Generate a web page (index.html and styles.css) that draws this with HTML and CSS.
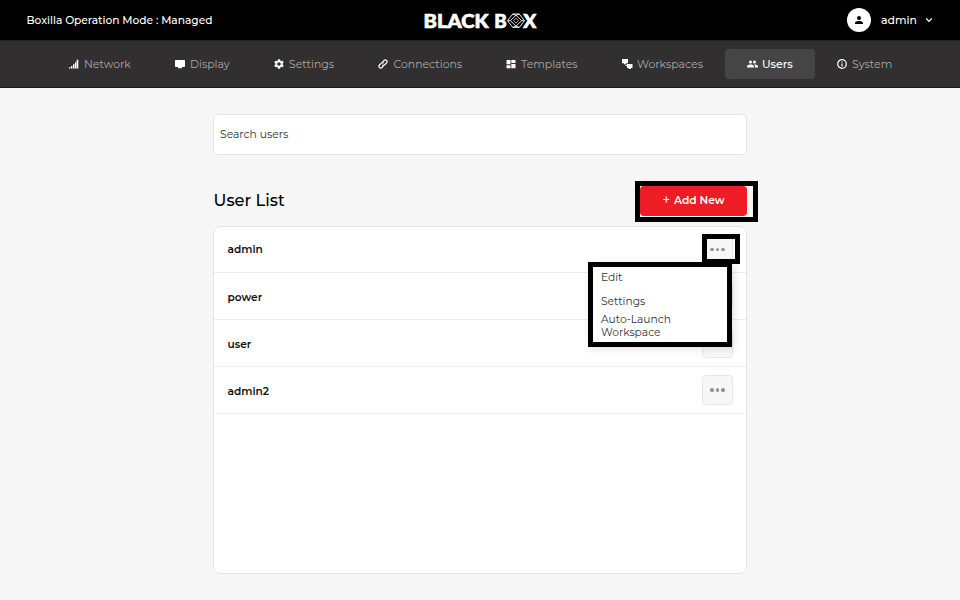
FILE: index.html
```html
<!DOCTYPE html>
<html lang="en">
<head>
<meta charset="utf-8">
<title>Boxilla - Users</title>
<link rel="stylesheet" href="styles.css">
</head>
<body>
<header class="topbar">
  <div class="mode">Boxilla Operation Mode : Managed</div>
  <svg class="logo" viewBox="-3.500 -5.500 120 30" role="img" aria-label="Black Box">
    <g class="logo-text">
      <text x="0" y="17.300" textLength="65" lengthAdjust="spacingAndGlyphs">BLACK</text>
      <text x="70.800" y="17.300" textLength="12.500" lengthAdjust="spacingAndGlyphs">B</text>
      <text x="99.800" y="17.300" textLength="13" lengthAdjust="spacingAndGlyphs">X</text>
    </g>
    <path class="logo-mark" d="M89.300 3.500h6.400l5.300 6.700-5.300 6.700h-6.400L84 10.200zM92.500 4.700l5.600 5.500-5.600 5.500-5.600-5.500zM89.300 3.500l3.200 1.200 3.200-1.200M89.300 16.900l3.200-1.200 3.200 1.200M84 10.200h2.900M98.100 10.200h2.900"/>
    <path class="logo-inner" d="M92.500 7.700l2.500 2.500-2.500 2.500-2.500-2.500z"/>
  </svg>
  <div class="account">
    <span class="avatar"><svg viewBox="0 0 24 24"><path d="M12 12a4 4 0 1 0 0-8 4 4 0 0 0 0 8zm0 2c-2.700 0-8 1.300-8 4v2h16v-2c0-2.700-5.300-4-8-4z"/></svg></span>
    <span class="account-name">admin</span>
    <svg class="chevron" viewBox="0 0 8 6"><path d="M1.200 1.500 4 4.300 6.800 1.500"/></svg>
  </div>
</header>
<nav class="nav">
  <a class="item"><svg class="icon" viewBox="0 0 10 10"><path d="M0 8.200h1.400V9.500H0zM2 7h1.400v2.500H2zM4 5.300h1.500v4.200H4zM6 3.300h1.300v6.200H6zM7.700.800h1.600v8.700H7.700z"/></svg><span class="label">Network</span></a>
  <a class="item"><svg class="icon" viewBox="0 0 10 10"><path d="M.8 1h8.400q.8 0 .8.800v5.400q0 .8-.8.800H7v1.200H3V8H.8Q0 8 0 7.200V1.800Q0 1 .8 1z"/></svg><span class="label">Display</span></a>
  <a class="item"><svg class="icon" viewBox="2 2 20 20"><path d="M19.140 12.940c.040-.3.060-.610.060-.940s-.020-.640-.070-.940l2.030-1.580a.49.49 0 0 0 .120-.610l-1.920-3.320a.49.49 0 0 0-.590-.220l-2.390.960a7 7 0 0 0-1.620-.940l-.360-2.540a.48.48 0 0 0-.480-.410h-3.840a.48.48 0 0 0-.470.410l-.360 2.540a7 7 0 0 0-1.620.940l-2.390-.960a.49.49 0 0 0-.590.220L2.740 8.870a.49.49 0 0 0 .120.610l2.030 1.580a6 6 0 0 0 0 1.880l-2.030 1.580a.49.49 0 0 0-.120.610l1.920 3.320c.120.220.370.290.590.220l2.390-.960a7 7 0 0 0 1.620.940l.36 2.540c.050.240.240.410.480.410h3.840c.240 0 .440-.170.470-.410l.36-2.540a7 7 0 0 0 1.620-.940l2.390.960c.220.080.470 0 .590-.220l1.920-3.320a.49.49 0 0 0-.120-.610zM12 15.600a3.600 3.600 0 1 1 0-7.200 3.600 3.600 0 0 1 0 7.200z"/></svg><span class="label">Settings</span></a>
  <a class="item"><svg class="icon line" viewBox="0 0 10 10"><path d="M4.600 2.900 6 1.500Q7.300.3 8.500 1.500T8.500 4L6.700 5.800Q5.400 7 4.200 5.800M5.400 7.100 4 8.500Q2.700 9.700 1.500 8.500T1.500 6L3.300 4.200Q4.600 3 5.800 4.200"/></svg><span class="label">Connections</span></a>
  <a class="item"><svg class="icon" viewBox="0 0 10 10"><path d="M.500 1h4v4.300h-4zM5.300 1h4.200v3H5.300zM.5 6.200h4v3h-4zM5.300 4.900h4.200v4.300H5.300z"/></svg><span class="label">Templates</span></a>
  <a class="item"><svg class="icon wide" viewBox="0 0 11 10"><path d="M0 .100h6v4.200H4.100v1H1.900v-1H0zM5 5h5.500v4H9v1H6.700V9H5V7H3.600V5.700H5z"/></svg><span class="label">Workspaces</span></a>
  <a class="item active"><svg class="icon wide" viewBox="1 3 22 18"><path d="M16 11a3 3 0 1 0-3-3 3 3 0 0 0 3 3zm-8 0a3 3 0 1 0-3-3 3 3 0 0 0 3 3zm0 2c-2.300 0-7 1.200-7 3.500V19h14v-2.500C15 14.200 10.300 13 8 13zm8 0h-1c1.200.8 2 2 2 3.500V19h6v-2.500c0-2.300-4.700-3.500-7-3.500z"/></svg><span class="label">Users</span></a>
  <a class="item"><svg class="icon ring" viewBox="0 0 10 10"><circle cx="5" cy="5" r="4.300"/><path d="M5 4.500v3M5 2.400v1.200"/></svg><span class="label">System</span></a>
</nav>
<main class="content">
  <input class="search" type="text" placeholder="Search users" aria-label="Search users">
  <div class="heading">
    <h1>User List</h1>
    <div class="add-wrap"><button class="add"><span class="plus">+</span>Add New</button></div>
  </div>
  <section class="list">
    <div class="row"><span class="name">admin</span>
      <button class="more"><i></i><i></i><i></i></button>
      <div class="menu"><a>Edit</a><a class="set">Settings</a><a class="auto">Auto-Launch<br>Workspace</a></div>
      <div class="more-frame"></div>
    </div>
    <div class="row"><span class="name">power</span><button class="more"><i></i><i></i><i></i></button></div>
    <div class="row"><span class="name">user</span><button class="more"><i></i><i></i><i></i></button></div>
    <div class="row"><span class="name">admin2</span><button class="more"><i></i><i></i><i></i></button></div>
  </section>
</main>
</body>
</html>
```
FILE: styles.css
```css
* { box-sizing: border-box; }
body { margin: 0; height: 600px; overflow: hidden; background: #f6f6f6; color: #111; font: 500 10.650px Montserrat, Inter, sans-serif; }
button { font: inherit; padding: 0; border: 0; }
.topbar { height: 40px; background: #000; color: #fff; display: grid; grid-template-columns: 1fr 120px 1fr; align-items: center; padding: 0 27.500px 0 26.500px; }
.mode { white-space: nowrap; padding-top: 1px; }
.logo { width: 120px; height: 30px; display: block; }
.logo-text { fill: #fff; stroke: #fff; stroke-width: .700; font: 900 19.500px Lato, sans-serif; }
.logo-mark { fill: none; stroke: #fff; stroke-width: .900; }
.logo-inner { fill: none; stroke: #fff; stroke-width: .700; }
.account { display: flex; align-items: center; justify-content: flex-end; }
.avatar { width: 24px; height: 24px; border-radius: 50%; background: #fff; display: grid; place-items: center; margin-right: 10px; }
.avatar svg { width: 12px; height: 12px; fill: #000; }
.account-name { width: 36px; font-size: 10.900px; }
.chevron { width: 8px; height: 6px; margin-left: 7.500px; fill: none; stroke: #fff; stroke-width: 1.200; }
.nav { height: 48px; background: #322f30; border-top: 1px solid #242223; border-bottom: 1px solid #1d1b1c; padding-left: 1px; display: grid; grid-template-columns: 106px 99px 104.500px 127.500px 116px 125px 90px 99.500px; justify-content: center; align-items: center; }
.item { height: 30px; display: flex; align-items: center; padding-left: 21.750px; border-radius: 4px; color: #a9a8a8; font-weight: 400; font-size: 10.900px; }
.active { background: #454545; color: #fff; font-weight: 500; }
.icon { width: 10px; height: 10px; margin-right: 5.500px; fill: #fff; flex: none; }
.wide { width: 11px; margin-right: 4.500px; }
.line, .ring { fill: none; stroke: #fff; stroke-width: 1.200; }
.label { white-space: nowrap; }
.content { width: 534px; margin: 26px auto 0; }
.search { display: block; width: 100%; height: 41px; border: 1px solid #e4e4e4; border-radius: 5px; padding: 0 6px; background: #fff; font: 400 10.800px Montserrat, Inter, sans-serif; }
.search::placeholder { color: #333; opacity: 1; }
.heading { height: 71px; display: flex; justify-content: space-between; padding-top: 26px; }
h1 { margin: 0; font-size: 16.300px; line-height: 39px; font-weight: 500; padding-left: .500px; color: #000; }
.add-wrap { width: 123px; height: 41px; border: 5px solid #000; margin-right: -11px; background: #f6f6f6; }
.add { display: block; width: 107px; height: 30px; border-radius: 4px; background: #ee1c24; color: #fff; font-weight: 600; font-size: 10.700px; line-height: 14px; padding-bottom: 2px; }
.plus { font-size: 13px; font-weight: 500; margin-right: 4px; }
.list { height: 348px; background: #fff; border: 1px solid #e4e4e4; border-radius: 8px; }
.row { position: relative; height: 47px; border-bottom: 1px solid #ededed; padding: 0 13px 0 13.500px; display: flex; align-items: center; justify-content: space-between; font-weight: 600; }
.row:first-child { height: 46px; }
.name { padding-top: 2px; }
.row:first-child .name { padding-top: 0; }
.more { width: 31px; height: 30px; border: 1px solid #e6e6e6; border-radius: 4px; background: #f7f7f7; display: flex; justify-content: center; align-items: center; gap: 1.500px; }
.more i { width: 3.700px; height: 3.700px; border-radius: 50%; background: #929292; }
.more-frame { position: absolute; left: 488px; top: 7px; width: 38px; height: 30px; border: 5px solid #000; z-index: 3; }
.menu { position: absolute; z-index: 2; left: 374px; top: 35px; width: 144px; height: 85px; border: 5px solid #000; background: #fff; padding: 4px 8px; box-shadow: 2px 2px 7px rgba(0, 0, 0, .12); color: #333; font-size: 10.700px; font-weight: 400; line-height: 13px; }
.menu a { display: block; }
.set { margin-top: 11px; }
.auto { margin-top: 5px; }
```
